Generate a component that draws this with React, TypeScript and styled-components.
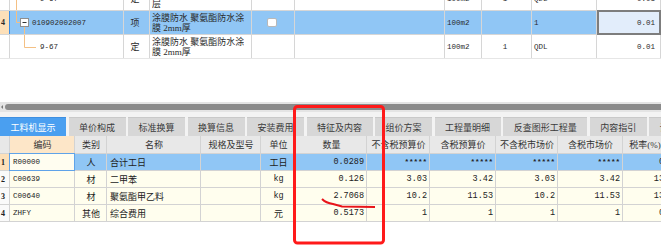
import React from 'react';
import styled, { createGlobalStyle, css } from 'styled-components';

const GlobalStyle = createGlobalStyle`
  html, body { margin: 0; padding: 0; background: #fff; }
  body {
    width: 661px; height: 249px; overflow: hidden;
    font-family: "Liberation Serif", "Noto Sans CJK SC", serif;
    font-size: 9px; color: #222;
  }
  * { box-sizing: border-box; }
`;

const TOP_COLS = '10px 114px 26px 102px 43px 150px 37px 50px 65px 64px';
const BOT_COLS = '10px 65px 32px 94px 60px 35px 71px 63px 66px 62px 65px 44px';

const Page = styled.div`
  position: relative;
  width: 661px;
  height: 249px;
  overflow: hidden;
  display: flex;
  flex-direction: column;
  background: #fff;
`;

const Mono = styled.span<{ $size?: number; $bold?: boolean }>`
  font-family: "Liberation Mono", "DejaVu Sans Mono", monospace;
  font-size: ${(p) => p.$size ?? 7.5}px;
  font-weight: ${(p) => (p.$bold ? 'bold' : 'normal')};
`;

const TopViewport = styled.div`
  flex: none;
  height: 59px;
  overflow: hidden;
  border-bottom: 1px solid #e6e6e6;
`;

const TopGrid = styled.div`
  margin-top: -13px;
  display: flex;
  flex-direction: column;
`;

const TopRow = styled.div<{ $sel?: boolean }>`
  display: grid;
  grid-template-columns: ${TOP_COLS};
  height: 24px;
  border-bottom: 1px solid #d6d6d6;
  background: ${(p) => (p.$sel ? '#90c6f5' : '#fff')};
`;

const TCell = styled.div<{ $align?: 'left' | 'center' | 'right'; $sel?: boolean; $num?: boolean; $selRow?: boolean }>`
  display: flex;
  align-items: center;
  justify-content: ${(p) => (p.$align === 'center' ? 'center' : p.$align === 'right' ? 'flex-end' : 'flex-start')};
  padding: 0 5px 0 2px;
  border-right: 1px solid #d6d6d6;
  white-space: nowrap;
  overflow: hidden;
  color: #2a2a2a;
  ${(p) =>
    p.$num &&
    css`
      padding: 0 0 0 1px;
      font-size: 8px;
      font-weight: bold;
      background: ${p.$selRow ? '#fde0b9' : '#fff'};
      border-right-color: ${p.$selRow ? '#3d8fe6' : '#d6d6d6'};
    `}
  ${(p) =>
    p.$sel &&
    css`
      background: #e2edfb;
      border: 2px solid #7d7d7d;
      margin: -1px 0 -1px 0;
      padding-right: 4px;
    `}
`;

const TreeCell = styled(TCell)`
  padding: 0;
  align-items: stretch;
`;

const TreeText = styled(Mono)<{ $gap?: number }>`
  align-self: center;
  margin-left: ${(p) => p.$gap ?? 0}px;
`;

const NameText = styled.div`
  line-height: 10.5px;
  max-height: 22px;
  overflow: hidden;
  white-space: nowrap;
  padding-top: 1px;
`;

const Check = styled.span`
  width: 10px;
  height: 9px;
  background: #fff;
  border: 1px solid #b8b8b8;
  border-radius: 2px;
`;

const Spacer = styled.div`
  flex: none;
  height: 43px;
  background: #fff;
`;

const ScrollTrack = styled.div`
  flex: none;
  height: 10px;
  background: #e4e4e4;
  display: flex;
  align-items: center;
  padding: 0 0 0 1px;
  gap: 2px;
`;

const ScrollArrow = styled.span`
  width: 0;
  height: 0;
  border-top: 2px solid transparent;
  border-bottom: 2px solid transparent;
  border-right: 2px solid #777;
`;

const ScrollThumb = styled.div`
  flex: 1;
  height: 6px;
  background: #8b8b8b;
  border-radius: 3px 0 0 3px;
`;

const TabBar = styled.div`
  flex: none;
  display: flex;
  gap: 2.5px;
  height: 24px;
  padding-top: 5px;
  background: #f3f3f3;
  overflow: hidden;
`;

const Tab = styled.div<{ $active?: boolean }>`
  flex: none;
  height: 19px;
  padding: 0 10.5px;
  display: flex;
  align-items: center;
  font-family: "Noto Sans CJK SC", sans-serif;
  font-size: 9px;
  white-space: nowrap;
  color: ${(p) => (p.$active ? '#fff' : '#3a3a3a')};
  background: ${(p) => (p.$active ? '#4a9ff0' : '#d7d7d7')};
  border-top: 1px solid ${(p) => (p.$active ? '#3e8fe0' : '#c9c9c9')};
`;

const BRow = styled.div<{ $head?: boolean; $sel?: boolean }>`
  display: grid;
  grid-template-columns: ${BOT_COLS};
  height: ${(p) => (p.$head ? 18 : 17)}px;
  border-bottom: 1px solid #d3d3d3;
  background: ${(p) => (p.$head ? '#e8e8e8' : p.$sel ? '#90c6f5' : '#fffeee')};
`;

const BCell = styled.div<{
  $align?: 'left' | 'center' | 'right';
  $tone?: 'peach' | 'num' | 'numSel' | 'sel';
  $head?: boolean;
}>`
  display: flex;
  align-items: center;
  justify-content: ${(p) => (p.$align === 'center' ? 'center' : p.$align === 'right' ? 'flex-end' : 'flex-start')};
  padding: 0 2px 0 3px;
  border-right: 1px solid #d3d3d3;
  white-space: nowrap;
  overflow: hidden;
  color: ${(p) => (p.$head ? '#333' : '#222')};
  ${(p) => p.$tone === 'peach' && css`background: #fde6c8;`}
  ${(p) =>
    (p.$tone === 'num' || p.$tone === 'numSel') &&
    css`
      padding: 0 0 0 1px;
      font-size: 8px;
      font-weight: bold;
      background: ${p.$tone === 'numSel' ? '#fde0b9' : p.$head ? '#e8e8e8' : '#fafafa'};
    `}
  ${(p) =>
    p.$tone === 'sel' &&
    css`
      background: #fffdf0;
      border: 1px solid #5fa3e9;
      margin: -1px 0 -1px -1px;
      padding-left: 3px;
    `}
`;

const Overlay = styled.svg`
  position: absolute;
  left: 0;
  top: 0;
  pointer-events: none;
`;

const TreeLine = ({ kind }: { kind: 'pass' | 'box' | 'leaf' }) => {
  const c = '#f4c084';
  if (kind === 'box') {
    return (
      <svg width="22" height="23" viewBox="0 0 22 23">
        <line x1="6.5" y1="0" x2="6.5" y2="11.5" stroke={c} />
        <line x1="6.5" y1="11.5" x2="10" y2="11.5" stroke={c} />
        <line x1="14.5" y1="16" x2="14.5" y2="23" stroke={c} />
        <rect x="10.5" y="7.5" width="8" height="8" fill="#fff" stroke="#8f8f8f" />
        <line x1="12.5" y1="11.5" x2="16.5" y2="11.5" stroke="#333" />
      </svg>
    );
  }
  if (kind === 'leaf') {
    return (
      <svg width="28" height="23" viewBox="0 0 28 23">
        <line x1="14.5" y1="0" x2="14.5" y2="12.5" stroke={c} />
        <line x1="14.5" y1="12.5" x2="26" y2="12.5" stroke={c} />
      </svg>
    );
  }
  return (
    <svg width="28" height="23" viewBox="0 0 28 23">
      <line x1="6.5" y1="0" x2="6.5" y2="23" stroke={c} />
    </svg>
  );
};

const tabs = ['工料机显示', '单价构成', '标准换算', '换算信息', '安装费用', '特征及内容', '组价方案', '工程量明细', '反查图形工程量', '内容指引', '说明信息'];

const headers: { t: string; tone?: 'peach' | 'num' }[] = [
  { t: '', tone: 'num' },
  { t: '编码', tone: 'peach' },
  { t: '类别' },
  { t: '名称' },
  { t: '规格及型号' },
  { t: '单位' },
  { t: '数量' },
  { t: '不含税预算价' },
  { t: '含税预算价' },
  { t: '不含税市场价' },
  { t: '含税市场价' },
  { t: '税率(%)' },
];

type Item = { n: string; code: string; type: string; name: string; unit: string; qty: string; p: string[]; tax: string };

const items: Item[] = [
  { n: '1', code: 'R00000', type: '人', name: '合计工日', unit: '工日', qty: '0.0289', p: ['*****', '*****', '*****', '*****'], tax: '0' },
  { n: '2', code: 'C00639', type: '材', name: '二甲苯', unit: 'kg', qty: '0.126', p: ['3.03', '3.42', '3.03', '3.42'], tax: '13' },
  { n: '3', code: 'C00640', type: '材', name: '聚氨酯甲乙料', unit: 'kg', qty: '2.7068', p: ['10.2', '11.53', '10.2', '11.53'], tax: '13' },
  { n: '4', code: 'ZHFY', type: '其他', name: '综合费用', unit: '元', qty: '0.5173', p: ['1', '1', '1', '1'], tax: '0' },
];

const NameLines = ({ a, b }: { a: string; b: string }) => (
  <NameText>
    {a}
    <br />
    {b}
  </NameText>
);

const isAscii = (s: string) => /^[\x00-\x7f]+$/.test(s);

export default function App() {
  return (
    <Page>
      <GlobalStyle />
      <TopViewport>
        <TopGrid>
          <TopRow>
            <TCell $num />
            <TreeCell>
              <TreeLine kind="pass" />
              <TreeText $gap={2}>9-67</TreeText>
            </TreeCell>
            <TCell $align="center">定</TCell>
            <TCell>
              <NameLines a="涂膜防水 聚氨酯防水涂" b="层" />
            </TCell>
            <TCell />
            <TCell />
            <TCell><Mono>100m2</Mono></TCell>
            <TCell $align="center"><Mono>1</Mono></TCell>
            <TCell><Mono>QDL</Mono></TCell>
            <TCell $align="right"><Mono>0.01</Mono></TCell>
          </TopRow>
          <TopRow $sel>
            <TCell $num $selRow>4</TCell>
            <TreeCell>
              <TreeLine kind="box" />
              <TreeText>010902002007</TreeText>
            </TreeCell>
            <TCell $align="center">项</TCell>
            <TCell>
              <NameLines a="涂膜防水 聚氨酯防水涂" b="膜 2mm厚" />
            </TCell>
            <TCell $align="center">
              <Check />
            </TCell>
            <TCell />
            <TCell><Mono>100m2</Mono></TCell>
            <TCell />
            <TCell><Mono>1</Mono></TCell>
            <TCell $align="right" $sel><Mono>0.01</Mono></TCell>
          </TopRow>
          <TopRow>
            <TCell $num />
            <TreeCell>
              <TreeLine kind="leaf" />
              <TreeText $gap={2}>9-67</TreeText>
            </TreeCell>
            <TCell $align="center">定</TCell>
            <TCell>
              <NameLines a="涂膜防水 聚氨酯防水涂" b="膜 2mm厚" />
            </TCell>
            <TCell />
            <TCell />
            <TCell><Mono>100m2</Mono></TCell>
            <TCell $align="center"><Mono>1</Mono></TCell>
            <TCell><Mono>QDL</Mono></TCell>
            <TCell $align="right"><Mono>0.01</Mono></TCell>
          </TopRow>
        </TopGrid>
      </TopViewport>
      <Spacer />
      <ScrollTrack>
        <ScrollArrow />
        <ScrollThumb />
      </ScrollTrack>
      <TabBar>
        {tabs.map((t, i) => (
          <Tab key={t} $active={i === 0}>
            {t}
          </Tab>
        ))}
      </TabBar>
      <BRow $head>
        {headers.map((h, i) => (
          <BCell key={i} $head $align="center" $tone={h.tone}>
            {h.t}
          </BCell>
        ))}
      </BRow>
      {items.map((it, i) => {
        const sel = i === 0;
        return (
          <BRow key={it.n} $sel={sel}>
            <BCell $tone={sel ? 'numSel' : 'num'}>{it.n}</BCell>
            <BCell $tone={sel ? 'sel' : undefined}>
              <Mono>{it.code}</Mono>
            </BCell>
            <BCell $align="center">{it.type}</BCell>
            <BCell>{it.name}</BCell>
            <BCell />
            <BCell $align="center">{isAscii(it.unit) ? <Mono $size={8.5}>{it.unit}</Mono> : it.unit}</BCell>
            <BCell $align="right">
              <Mono $size={8.5}>{it.qty}</Mono>
            </BCell>
            {it.p.map((v, j) => (
              <BCell key={j} $align="right">
                {v.startsWith('*') ? (
                  <Mono $size={7.5} $bold>
                    {v}
                  </Mono>
                ) : (
                  <Mono $size={8.5}>{v}</Mono>
                )}
              </BCell>
            ))}
            <BCell $align="right">
              <Mono $size={8.5}>{it.tax}</Mono>
            </BCell>
          </BRow>
        );
      })}
      <Overlay width="661" height="249" viewBox="0 0 661 249">
        <rect x="294.5" y="106.5" width="89" height="136.5" rx="3" fill="none" stroke="#ff1a1a" strokeWidth="3" />
        <path d="M322 199 Q326 203 333 204 L342 206.5 L375 207" fill="none" stroke="#e8141a" strokeWidth="2" />
      </Overlay>
    </Page>
  );
}
